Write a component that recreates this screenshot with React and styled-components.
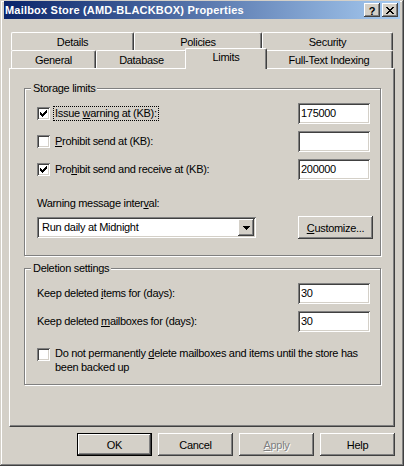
import React from 'react';
import styled, {createGlobalStyle, css} from 'styled-components';

const GlobalStyle = createGlobalStyle`
  html, body {
    margin: 0;
    padding: 0;
    background: #d4d0c8;
    overflow: hidden;
  }
  body {
    font-family: "Liberation Sans", Arial, sans-serif;
    font-size: 11px;
    letter-spacing: -0.3px;
    color: #000;
  }
`;

const raised = css`
  background: #d4d0c8;
  box-shadow: inset -1px -1px #404040, inset 1px 1px #fff, inset -2px -2px #808080, inset 2px 2px #d4d0c8;
`;

const sunken = css`
  background: #fff;
  box-shadow: inset 1px 1px #808080, inset -1px -1px #fff, inset 2px 2px #404040, inset -2px -2px #d4d0c8;
`;

const CheckMark = () => (
    <svg width="7" height="7" viewBox="0 0 7 7" shapeRendering="crispEdges">
        <path d="M0 2h1v3H0zM1 3h1v3H1zM2 4h1v3H2zM3 3h1v3H3zM4 2h1v3H4zM5 1h1v3H5zM6 0h1v3H6z" fill="#000"/>
    </svg>
);

const Mn = ({children}) => <u>{children}</u>;

const App = () => {
    return (
        <>
            <GlobalStyle/>
            <Window>
                <TitleBar>
                    <Caption>Mailbox Store (AMD-BLACKBOX) Properties</Caption>
                    <TitleButtons>
                        <TitleButton>?</TitleButton>
                        <TitleButton $close>
                            <svg width="8" height="7" viewBox="0 0 8 7" shapeRendering="crispEdges">
                                <path d="M0 0h2v1H0zM6 0h2v1H6zM1 1h2v1H1zM5 1h2v1H5zM2 2h4v1H2zM3 3h2v1H3zM2 4h4v1H2zM1 5h2v1H1zM5 5h2v1H5zM0 6h2v1H0zM6 6h2v1H6z" fill="#000"/>
                            </svg>
                        </TitleButton>
                    </TitleButtons>
                </TitleBar>

                <Body>
                    <TabRow>
                        <Tab $w={123}>Details</Tab>
                        <Tab $w={128}>Policies</Tab>
                        <Tab $w={131}>Security</Tab>
                    </TabRow>
                    <TabRow>
                        <Tab $w={85}>General</Tab>
                        <Tab $w={91}>Database</Tab>
                        <Tab $w={78} $active>Limits</Tab>
                        <Tab $w={128}>Full-Text Indexing</Tab>
                    </TabRow>

                    <Panel>
                        <Group $h={168}>
                            <Legend>Storage limits</Legend>
                            <FieldRow>
                                <CheckLabel>
                                    <Check><CheckMark/></Check>
                                    <LabelText $focus>Issue <Mn>w</Mn>arning at (KB):</LabelText>
                                </CheckLabel>
                                <TextField>175000</TextField>
                            </FieldRow>
                            <FieldRow>
                                <CheckLabel>
                                    <Check/>
                                    <LabelText><Mn>P</Mn>rohibit send at (KB):</LabelText>
                                </CheckLabel>
                                <TextField/>
                            </FieldRow>
                            <FieldRow>
                                <CheckLabel>
                                    <Check><CheckMark/></Check>
                                    <LabelText>Pro<Mn>h</Mn>ibit send and receive at (KB):</LabelText>
                                </CheckLabel>
                                <TextField>200000</TextField>
                            </FieldRow>

                            <Caption2>Warning message inter<Mn>v</Mn>al:</Caption2>
                            <ComboRow>
                                <Combo>
                                    <ComboText>Run daily at Midnight</ComboText>
                                    <DropButton>
                                        <svg width="7" height="4" viewBox="0 0 7 4" shapeRendering="crispEdges">
                                            <path d="M0 0h7v1H0zM1 1h5v1H1zM2 2h3v1H2zM3 3h1v1H3z" fill="#000"/>
                                        </svg>
                                    </DropButton>
                                </Combo>
                                <Button><Mn>C</Mn>ustomize...</Button>
                            </ComboRow>
                        </Group>

                        <Group $h={117} $gap={12}>
                            <Legend>Deletion settings</Legend>
                            <FieldRow>
                                <PlainLabel>Keep deleted <Mn>i</Mn>tems for (days):</PlainLabel>
                                <TextField>30</TextField>
                            </FieldRow>
                            <FieldRow $gap={7}>
                                <PlainLabel>Keep deleted <Mn>m</Mn>ailboxes for (days):</PlainLabel>
                                <TextField>30</TextField>
                            </FieldRow>
                            <WrapRow>
                                <Check/>
                                <WrapText>
                                    Do not permanently <Mn>d</Mn>elete mailboxes and items until the store has<br/>
                                    been backed up
                                </WrapText>
                            </WrapRow>
                        </Group>
                    </Panel>

                    <ButtonBar>
                        <Button $default>OK</Button>
                        <Button>Cancel</Button>
                        <Button $disabled><Mn>A</Mn>pply</Button>
                        <Button>Help</Button>
                    </ButtonBar>
                </Body>
            </Window>
        </>
    )
}

const Window = styled.div`
  width: 404px;
  height: 466px;
  box-sizing: border-box;
  padding: 1px 4px 4px 4px;
  background: #d4d0c8;
  box-shadow: inset -1px -1px #404040, inset 1px 1px #d4d0c8, inset -2px -2px #808080, inset 2px 2px #fff;
  display: flex;
  flex-direction: column;
`;

const TitleBar = styled.div`
  height: 18px;
  display: flex;
  align-items: center;
  justify-content: space-between;
  padding: 0 2px 0 1px;
  background: linear-gradient(to right, #0a246a, #a6caf0);
`;

const Caption = styled.div`
  color: #fff;
  font-weight: bold;
  font-size: 11px;
  letter-spacing: 0.2px;
  white-space: nowrap;
`;

const TitleButtons = styled.div`
  display: flex;
  gap: 2px;
`;

const TitleButton = styled.div`
  ${raised};
  width: 16px;
  height: 14px;
  box-sizing: border-box;
  display: flex;
  align-items: center;
  justify-content: center;
  font-weight: bold;
  font-size: 11px;
  line-height: 14px;
  padding-top: ${p => p.$close ? '0' : '1px'};
`;

const Body = styled.div`
  flex: 1;
  display: flex;
  flex-direction: column;
  padding: 13px 5px 0 5px;
`;

const TabRow = styled.div`
  display: flex;
  height: 18px;
  margin: 0 2px;
  align-items: flex-end;
`;

const Tab = styled.div`
  width: ${p => p.$w}px;
  height: 18px;
  box-sizing: border-box;
  display: flex;
  align-items: center;
  justify-content: center;
  background: #d4d0c8;
  border-top: 1px solid #fff;
  border-left: 1px solid #fff;
  border-right: 1px solid #404040;
  border-radius: 2px 2px 0 0;
  box-shadow: inset -1px 0 #808080;
  white-space: nowrap;
  ${p => p.$active && css`
    position: relative;
    z-index: 1;
    width: ${p.$w + 4}px;
    height: 21px;
    margin: 0 -2px -1px -2px;
    padding-bottom: 4px;
  `}
`;

const Panel = styled.div`
  height: 359px;
  box-sizing: border-box;
  border-top: 1px solid #fff;
  border-left: 1px solid #fff;
  border-right: 1px solid #404040;
  border-bottom: 1px solid #404040;
  box-shadow: inset -1px -1px #808080;
  padding: 19px 0 0 14px;
`;

const Group = styled.div`
  position: relative;
  width: 357px;
  height: ${p => p.$h}px;
  box-sizing: border-box;
  margin-top: ${p => p.$gap || 0}px;
  border: 1px solid #808080;
  box-shadow: inset 1px 1px #fff, 1px 1px #fff;
  padding: 14px 7px 0 12px;
  display: flex;
  flex-direction: column;
`;

const Legend = styled.div`
  position: absolute;
  top: -7px;
  left: 6px;
  padding: 0 2px;
  line-height: 13px;
  background: #d4d0c8;
`;

const FieldRow = styled.div`
  display: flex;
  align-items: center;
  justify-content: space-between;
  height: 21px;
  margin-top: ${p => p.$gap === undefined ? 0 : p.$gap}px;
  & + & {
    margin-top: ${p => p.$gap === undefined ? 9 : p.$gap}px;
  }
`;

const CheckLabel = styled.div`
  display: flex;
  align-items: center;
`;

const Check = styled.div`
  ${sunken};
  width: 13px;
  height: 13px;
  flex-shrink: 0;
  display: flex;
  align-items: center;
  justify-content: center;
`;

const LabelText = styled.span`
  margin-left: 3px;
  padding: 0 1px;
  line-height: 13px;
  border: 1px ${p => p.$focus ? 'dotted #000' : 'solid transparent'};
`;

const PlainLabel = styled.span`
  line-height: 13px;
`;

const TextField = styled.div`
  ${sunken};
  width: 72px;
  height: 21px;
  margin-right: 3px;
  box-sizing: border-box;
  padding: 3px 3px 0 3px;
  line-height: 14px;
`;

const Caption2 = styled.div`
  margin-top: 17px;
  line-height: 13px;
`;

const ComboRow = styled.div`
  display: flex;
  align-items: center;
  justify-content: space-between;
  height: 23px;
  margin-top: 6px;
`;

const Combo = styled.div`
  ${sunken};
  width: 219px;
  height: 21px;
  box-sizing: border-box;
  padding: 2px;
  display: flex;
  align-items: stretch;
  justify-content: space-between;
`;

const ComboText = styled.span`
  padding-left: 3px;
  line-height: 17px;
`;

const DropButton = styled.div`
  ${raised};
  width: 16px;
  display: flex;
  align-items: center;
  justify-content: center;
`;

const Button = styled.div`
  width: 75px;
  height: 23px;
  box-sizing: border-box;
  display: flex;
  align-items: center;
  justify-content: center;
  ${raised};
  ${p => p.$default && css`
    box-shadow: inset 0 0 0 1px #000, inset -2px -2px #404040, inset 2px 2px #fff, inset -3px -3px #808080;
  `}
  ${p => p.$disabled && css`
    color: #808080;
    text-shadow: 1px 1px #fff;
  `}
`;

const WrapRow = styled.div`
  display: flex;
  align-items: flex-start;
  margin-top: 14px;
  & > div:first-child {
    margin-top: 2px;
  }
`;

const WrapText = styled.div`
  margin-left: 5px;
  line-height: 14px;
`;

const ButtonBar = styled.div`
  display: flex;
  justify-content: flex-end;
  gap: 6px;
  margin-top: 6px;
`;

export default App;
